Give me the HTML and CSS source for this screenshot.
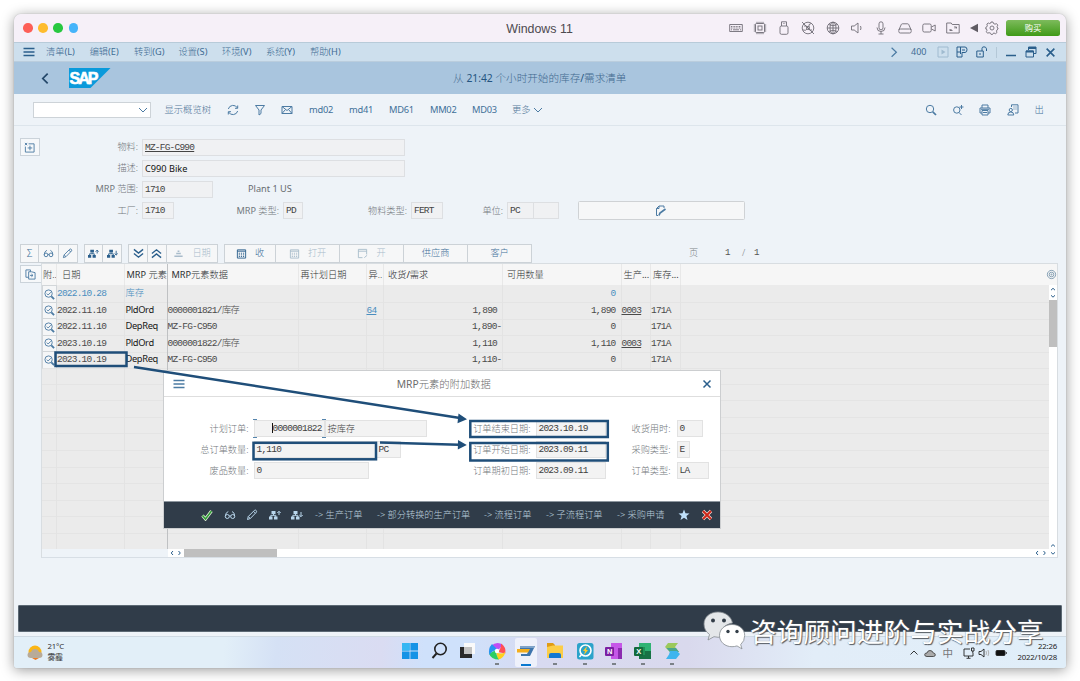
FILE: index.html
```html
<!DOCTYPE html>
<html lang="zh-CN">
<head>
<meta charset="utf-8">
<title>Windows 11</title>
<link rel="stylesheet" href="styles.css">
</head>
<body>
<svg class="defs" aria-hidden="true">
  <defs>
    <symbol id="pencil" viewBox="0 0 12 12"><path d="M1.500 10.500l.8-3L8.500 1.300q1-.6 1.700.2t.2 1.700L4.300 9.500zM7.500 2.300l2 2M2.300 7.500l2 2"/></symbol>
    <symbol id="glasses" viewBox="0 0 12 12"><circle cx="3.300" cy="7.500" r="2"/><circle cx="8.700" cy="7.500" r="2"/><path d="M1.300 7.300Q1.500 3.500 4.300 2.500M10.700 7.300Q10.800 3.500 8 2.500M5.300 7h1.400"/></symbol>
    <symbol id="tree-up" viewBox="0 0 12 12"><path class="solid" d="M2.500 2h4v3h-4zM0 7.500h3.500v3H0zM5 7.500h3.500v3H5z"/><path d="M4.500 5v1.500M1.800 8V6.300h5V8M10 6V2.500M8.300 4L10 2.300 11.700 4"/></symbol>
    <symbol id="tree-down" viewBox="0 0 12 12"><path class="solid" d="M2.500 2h4v3h-4zM0 7.500h3.500v3H0zM5 7.500h3.500v3H5z"/><path d="M4.500 5v1.500M1.800 8V6.300h5V8M10 3v4.500M8.300 6L10 7.700 11.700 6"/></symbol>
    <symbol id="calendar" viewBox="0 0 12 12"><path d="M1.500 2h9v9h-9zM1.500 3.500h9"/><path stroke-dasharray="1.300 1" d="M3 5.700h6.500M3 7.500h6.500M3 9.300h6.500"/></symbol>
    <symbol id="detail" viewBox="0 0 12 12"><circle cx="5" cy="5" r="4"/><path d="M3 5l1.500 1.500L7.500 3.500"/><path stroke-width="2" d="M8 8l3 3"/></symbol>
    <symbol id="chev" viewBox="0 0 10 10"><path d="M1 3l4 4 4-4"/></symbol>
    <symbol id="cross" viewBox="0 0 10 10"><path d="M1.500 1.500l7 7M8.500 1.500l-7 7"/></symbol>
    <symbol id="burger" viewBox="0 0 12 10"><path d="M.5 1.500h11M.5 5h11M.5 8.500h11"/></symbol>
  </defs>
</svg>
<div class="window">
  <header class="titlebar">
    <div class="lights"><i class="l-close"></i><i class="l-min"></i><i class="l-max"></i><i class="l-view"></i></div>
    <div class="wintitle">Windows 11</div>
    <div class="devices">
      <svg viewBox="0 0 14 14"><path d="M.7 3.500h12.600v7H.7z"/><path stroke-dasharray="1 .6" d="M2 5.500h10M2 7h10"/><path d="M2 8.800h1M4 8.800h6M11 8.800h1"/></svg>
      <svg viewBox="0 0 14 14"><rect x="2.500" y="2.500" width="9" height="9" rx="1"/><rect x="5" y="5" width="4" height="4"/><path d="M4 .8v1.700M6 .8v1.700M8 .8v1.700M10 .8v1.700M4 11.500v1.700M6 11.500v1.700M8 11.500v1.700M10 11.500v1.700M.8 4h1.700M.8 6h1.700M.8 8h1.700M.8 10h1.700M11.500 4h1.700M11.500 6h1.700M11.500 8h1.700M11.500 10h1.700"/></svg>
      <svg viewBox="0 0 14 14"><path d="M4.500 5V.8h5V5M6 2.500h.6M7.500 2.500h.6"/><rect x="3" y="5" width="8" height="8.300" rx="1.500"/></svg>
      <svg viewBox="0 0 14 14"><circle cx="7" cy="7" r="5.800"/><circle cx="7" cy="7" r="1.500"/><path d="M1 1l12 12M3 5q3-1 4 2t4 2M10 2.500Q7 3 8 6M2 9q3 1 4-1"/></svg>
      <svg viewBox="0 0 14 14"><circle cx="7" cy="7" r="5.800"/><path d="M7 1v12M1 7h12M2.500 3.500q4.500 2.500 9 0M2.500 10.500q4.500-2.500 9 0"/><ellipse cx="7" cy="7" rx="3" ry="5.800"/></svg>
      <svg viewBox="0 0 14 14"><path d="M1.500 5h2.700L8 2v10L4.200 9H1.500zM10.500 5q1 2 0 4"/></svg>
      <svg viewBox="0 0 14 14"><rect x="5" y=".8" width="4" height="8" rx="2"/><path d="M3 6.500q0 4 4 4t4-4M7 10.500V13M4.500 13h5"/></svg>
      <svg viewBox="0 0 14 14"><path d="M.8 9l2.500-5.500q.3-.7 1-.7h5.400q.7 0 1 .7L13.200 9"/><rect x=".8" y="8" width="12.400" height="4" rx="1.500"/></svg>
      <svg viewBox="0 0 14 14"><rect x=".8" y="3" width="8.400" height="8" rx="1.500"/><path d="M9.500 6l3.700-2v6l-3.700-2"/></svg>
      <svg viewBox="0 0 14 14"><path d="M.7 12V2h4.500l1 1.500h7V12zM4 9.500l1.500-1.500M4 9.500h2.500M4 9.500l0-1.500M10.500 6L9 7.500M10.500 6H8M10.500 6v1.500"/></svg>
      <svg class="narrow" viewBox="0 0 14 14"><path class="solid" d="M3 7l8-4.300v8.600z"/></svg>
      <svg class="gear" viewBox="0 0 14 14"><path d="M6 1h2l.5 1.500 1.500.7 1.500-.6 1.300 1.500-.7 1.400.4 1.500.5 0v1l-1 .8-.5 1.300.5 1.400-1.500 1.200-1.500-.7-1 .4-.5 1.100H6.200l-.7-1.400-1.500-.4-1.500.5-1.200-1.500.7-1.400-.6-1.500L.8 8V6.300L2 5.700l.3-1.500-.5-1.100L3.300 2l1.400.6L5.800 2z"/><circle cx="7" cy="7" r="2"/></svg>
    </div>
    <div class="buy">购买</div>
  </header>

  <nav class="menubar">
    <svg class="ic dark thick" viewBox="0 0 12 10"><use href="#burger"/></svg>
    <span>清单<b>(L)</b></span><span>编辑<b>(E)</b></span><span>转到<b>(G)</b></span><span>设置<b>(S)</b></span><span>环境<b>(V)</b></span><span>系统<b>(Y)</b></span><span>帮助<b>(H)</b></span>
    <svg class="ic" viewBox="0 0 10 10"><path d="M3 1.500L7 5.200 3 9"/></svg>
    <b class="client">400</b>
    <svg class="ic faint" viewBox="0 0 12 12"><path d="M1 1h10v10H1z"/><path class="solid" d="M4.500 3.500L8.500 6l-4 2.500z"/></svg>
    <svg class="ic dark" viewBox="0 0 12 12"><path d="M1 1h8q2 0 2 2.700T9 6.500H6V11H1zM1 6h3M4.500 1v7M6 4h3"/></svg>
    <svg class="ic dark" viewBox="0 0 12 12"><path d="M.8 5h6.500v6H.8zM6 5V2.500Q6 .8 8 .8t2.500 2V5M4 7v2"/></svg>
    <i class="vsep"></i>
    <svg class="ic dark thick" viewBox="0 0 12 12"><path d="M1 9.500h10"/></svg>
    <svg class="ic dark" viewBox="0 0 12 12"><path d="M1 5h7.500v6H1zM3.500 4V1H11v6.500H9"/><path class="solid" d="M1 4.500h7.500v2H1zM3.500 1H11v2H3.500z"/></svg>
    <svg class="ic dark thick x" viewBox="0 0 10 10"><use href="#cross"/></svg>
  </nav>

  <div class="apphead">
    <svg class="ic back" viewBox="0 0 10 12"><path d="M7 1.500L2.500 6 7 10.500"/></svg>
    <svg class="logo" viewBox="0 0 42 20"><path fill="#0a9adb" d="M0 0h41.500L21.500 20H0z"/><text x="0.500" y="15.500" textLength="29">SAP</text></svg>
    <div class="apptitle">从 <b>21:42</b> 个小时开始的库存<b>/</b>需求清单</div>
  </div>

  <div class="toolbar">
    <div class="combo"><svg class="ic" viewBox="0 0 10 10"><use href="#chev"/></svg></div>
    <span class="cjk">显示概览树</span>
    <svg class="ic" viewBox="0 0 12 12"><path d="M1.300 5A5 5 0 0 1 10.500 4M10.700 7A5 5 0 0 1 1.500 8M10.700 1.500V4.300H8M1.300 10.500V7.700H4"/></svg>
    <svg class="ic" viewBox="0 0 12 12"><path d="M1.500 1.500h9L7 6v3.500L5 11V6z"/></svg>
    <svg class="ic" viewBox="0 0 12 12"><path d="M1 2.500h10v7H1zM1 2.500l5 4 5-4M1 9.500l3.500-4M11 9.500l-3.500-4"/></svg>
    <b>md02</b><b>md41</b><b>MD61</b><b>MM02</b><b>MD03</b><span class="cjk more">更多</span>
    <svg class="ic small" viewBox="0 0 10 10"><use href="#chev"/></svg>
    <i></i>
    <svg class="ic" viewBox="0 0 12 12"><circle cx="5" cy="5" r="3.700"/><path class="w2" d="M7.800 7.800l3.200 3.200"/></svg>
    <svg class="ic" viewBox="0 0 12 12"><circle cx="4.800" cy="6" r="3.200"/><path d="M7 8.500l2.500 2.500M9.500 1v4M7.500 3h4"/></svg>
    <svg class="ic" viewBox="0 0 12 12"><path d="M3 4V1h6v3M3 9H1V4h10v5H9M3 6.500h6V11H3zM4 8.500h4M2 5.300h8"/></svg>
    <svg class="ic" viewBox="0 0 12 12"><path d="M4.500 3V.8H11V9H8M6.500 3h1M8.500 3h1M6.500 5h1M8.500 5h1"/><circle cx="3.800" cy="6" r="1.600"/><path d="M.8 11q0-3 3-3t3 3z"/></svg>
    <span class="out">出</span>
  </div>

  <main class="work">
    <section class="form">
      <div class="sq"><svg class="ic" viewBox="0 0 12 12"><path d="M5 2h6v9H1.500V5M6.500 4v5M4 6.500h5M1 1l2.500 2.500M3.500 1L1 3.500"/></svg></div>
      <div class="lines">
        <div class="line"><label>物料:</label><div class="fld wide mono"><u>MZ-FG-C990</u></div></div>
        <div class="line"><label>描述:</label><div class="fld wide strong">C990 Bike</div></div>
        <div class="line"><label><b>MRP</b> 范围:</label><div class="fld mono w71">1710</div><b class="plant">Plant 1 US</b></div>
        <div class="line"><label>工厂:</label><div class="fld mono w32">1710</div><label class="l2"><b>MRP</b> 类型:</label><div class="fld mono w20">PD</div><label class="l3">物料类型:</label><div class="fld mono w32">FERT</div><label class="l4">单位:</label><div class="fld mono w27">PC</div><div class="fld w26"></div>
          <div class="editbtn"><svg class="ic" viewBox="0 0 12 12"><path d="M3 10.500H1.500V3.500L4 1h5v2M1.500 3.500H4V1"/><path class="w2" d="M4 10.500l1-2.500 5.500-4"/></svg></div></div>
      </div>
    </section>

    <section class="actions">
      <div class="grp"><div class="b sigma">Σ</div><div class="b"><svg class="ic" viewBox="0 0 12 12"><use href="#glasses"/></svg></div><div class="b"><svg class="ic" viewBox="0 0 12 12"><use href="#pencil"/></svg></div></div>
      <div class="grp"><div class="b"><svg class="ic dark" viewBox="0 0 12 12"><use href="#tree-up"/></svg></div><div class="b"><svg class="ic dark" viewBox="0 0 12 12"><use href="#tree-down"/></svg></div></div>
      <div class="grp"><div class="b"><svg class="ic dark thick" viewBox="0 0 12 12"><path d="M1 1.500l5 4 5-4M1 6l5 4 5-4"/></svg></div><div class="b"><svg class="ic dark thick" viewBox="0 0 12 12"><path d="M1 6l5-4 5 4M1 10.500l5-4 5 4"/></svg></div><div class="b w51 off"><svg class="ic" viewBox="0 0 12 12"><path d="M5 3.500h2M3.500 6h5M1.500 9h9" class="w2"/></svg>日期</div></div>
      <div class="grp"><div class="b w52"><svg class="ic dark" viewBox="0 0 12 12"><use href="#calendar"/></svg>收</div><div class="b w64 off"><svg class="ic" viewBox="0 0 12 12"><use href="#calendar"/></svg>打开</div><div class="b w64 off"><svg class="ic" viewBox="0 0 12 12"><path d="M6 10.500H1.500v-9h9V7M1.500 3.500h9M8 10.500l3-2.500"/></svg>开</div><div class="b w64">供应商</div><div class="b w64">客户</div></div>
      <div class="pager"><span>页</span><b>1</b><span>/</span><b>1</b></div>
    </section>

    <section class="gridrow">
      <div class="sq"><svg class="ic" viewBox="0 0 12 12"><path d="M4 9H1V1h5v2M4 3h3l4 1v7H4zM5.500 7h3M7 5.500L8.700 7 7 8.500"/></svg></div>
      <div class="table">
        <div class="thead cols"><span>附..</span><span>日期</span><span><b>MRP</b> 元素</span><span><b>MRP</b>元素数据</span><span>再计划日期</span><span>异..</span><span>收货<b>/</b>需求</span><span>可用数量</span><span>生产<b>...</b></span><span>库存<b>...</b></span><span class="cfg"><svg class="ic" viewBox="0 0 12 12"><circle cx="6" cy="6" r="4.500"/><circle cx="6" cy="6" r="2.500"/><circle cx="6" cy="6" r=".6"/></svg></span></div>
        <div class="tbody">
          <div class="rows">
            <div class="tr cols stock"><span class="mag"><svg class="ic" viewBox="0 0 12 12"><use href="#detail"/></svg></span><span>2022.10.28</span><span class="el">库存</span><span></span><span></span><span></span><span></span><span class="num">0</span><span></span><span></span><span></span></div>
            <div class="tr cols"><span class="mag"><svg class="ic" viewBox="0 0 12 12"><use href="#detail"/></svg></span><span>2022.11.10</span><span class="el">PldOrd</span><span>0000001821/库存</span><span></span><span class="exc"><u>64</u></span><span class="num">1,890</span><span class="num">1,890</span><span><u>0003</u></span><span>171A</span><span></span></div>
            <div class="tr cols"><span class="mag"><svg class="ic" viewBox="0 0 12 12"><use href="#detail"/></svg></span><span>2022.11.10</span><span class="el">DepReq</span><span>MZ-FG-C950</span><span></span><span></span><span class="num neg">1,890-</span><span class="num">0</span><span></span><span>171A</span><span></span></div>
            <div class="tr cols"><span class="mag"><svg class="ic" viewBox="0 0 12 12"><use href="#detail"/></svg></span><span>2023.10.19</span><span class="el">PldOrd</span><span>0000001822/库存</span><span></span><span></span><span class="num">1,110</span><span class="num">1,110</span><span><u>0003</u></span><span>171A</span><span></span></div>
            <div class="tr cols"><span class="mag"><svg class="ic" viewBox="0 0 12 12"><use href="#detail"/></svg></span><span>2023.10.19</span><span class="el">DepReq</span><span>MZ-FG-C950</span><span></span><span></span><span class="num neg">1,110-</span><span class="num">0</span><span></span><span>171A</span><span></span></div>
            <div class="tr cols fill"><span></span><span></span><span></span><span></span><span></span><span></span><span></span><span></span><span></span><span></span><span></span></div>
          </div>
          <div class="vscroll">
            <svg class="ic dark" viewBox="0 0 8 15"><path d="M2 5.200L4 3.300 6 5.200M2 10.300L4 12.200l2-1.900"/></svg>
            <i class="thumb"></i><i class="track"></i>
            <svg class="ic dark" viewBox="0 0 8 7"><path d="M2 4.500L4 2.600l2 1.900"/></svg>
          </div>
        </div>
        <div class="hscroll">
          <svg class="ic dark" viewBox="0 0 16 8"><path d="M5 2L3.200 4 5 6M10.500 2l1.800 2-1.800 2"/></svg>
          <i class="hthumb"></i><i class="track"></i>
          <svg class="ic dark last" viewBox="0 0 24 8"><path d="M5 2L3.200 4 5 6M10.500 2l1.800 2-1.800 2M18 3.300l2 1.900 2-1.900"/></svg>
        </div>
      </div>
    </section>
    <div class="statusbar"></div>
  </main>

  <footer class="taskbar">
    <svg class="weather" viewBox="0 0 16 15"><circle cx="8" cy="7" r="6.500" fill="#fbb615"/><path fill="#ef7a22" d="M5 13h7l-3.500 2z"/><path fill="#b8ab99" d="M4 13q-3.500 0-3.500-3T4 7q1-3 4-3t4 3q3.500 0 3.500 3T12 13z"/></svg>
    <div class="temp">21°C<br>雾霾</div>
    <div class="apps">
      <svg viewBox="0 0 20 20"><path fill="#1593e6" d="M2 2h7.600v7.600H2zM10.400 2H18v7.600h-7.600zM2 10.400h7.600V18H2zM10.400 10.400H18V18h-7.600z"/><path fill="#35b7f3" d="M2 2h7.600v7.600H2z"/></svg>
      <svg viewBox="0 0 20 20"><circle cx="11.500" cy="8" r="5.700" fill="none" stroke="#222" stroke-width="1.600"/><path d="M7.500 12.500L3.500 17" stroke="#222" stroke-width="1.900"/></svg>
      <svg viewBox="0 0 20 20"><path fill="#2a2a2a" d="M2 6h12v11H2z"/><path fill="#fafafa" d="M6 2h11v11H6z"/><path fill="#c2c2c2" d="M6 6h8v7H6z"/></svg>
      <svg class="run" viewBox="0 0 20 20"><g transform="translate(10 10)"><path fill="#c04cf5" d="M-6-5Q0-10.500 6-6L1-1Q-2-4-6-5z"/><path fill="#ff4f55" d="M4-7.500Q9.500-4 8.300 2.500L1 1Q4.500-3 4-7.500z"/><path fill="#ffcf1e" d="M8.300 1Q7 7.500 1 8.500L-1 1Q4 4 8.300 1z"/><path fill="#2bce64" d="M2 8.500Q-6 8.500-8 2.500L-1-1Q-1 5 2 8.500z"/><path fill="#2793f2" d="M-7.500 4Q-9.500-2-5-7L1-1Q-5-1-7.500 4z"/><circle r="2.200" fill="#fff"/></g></svg>
      <svg class="active" viewBox="0 0 20 20"><path fill="#3e75ad" d="M4 5h15l-5 10H5v-2h6l1-2H4z"/><path fill="#7fa3c8" d="M4 5h15l-1 2H4z"/><path fill="#f4ae1b" d="M1 8h13l-2 3.500H1z"/></svg>
      <svg class="run" viewBox="0 0 20 20"><path fill="#e09b14" d="M2 2h6l2 2v4H2z"/><path fill="#fccd47" d="M2 6l6-1.500h10V17H2z"/><path fill="#1377d2" d="M4 17v-3q0-2 2-2h8q2 0 2 2v3z"/></svg>
      <svg class="run" viewBox="0 0 20 20"><rect x="2" y="2" width="16.500" height="16.500" rx="2.500" fill="#2ba3ca"/><circle cx="10.500" cy="9.500" r="5.500" fill="none" stroke="#fff" stroke-width="1.600"/><path fill="#ffc928" d="M12 5l-4 5h2l-1 4 4-5h-2z"/><path stroke="#fff" stroke-width="1.500" d="M6.500 13.500l-2 2.500"/></svg>
      <svg class="run" viewBox="0 0 20 20"><path fill="#c657e8" d="M7 2h11v16H7z"/><path fill="#8c2bb0" d="M14 7h4v11h-4z"/><rect x="1" y="6" width="9" height="9" rx="1" fill="#7b1fa2"/><text x="3" y="13" class="glyph">N</text></svg>
      <svg class="run" viewBox="0 0 20 20"><path fill="#2fb373" d="M6 2h12v8H6z"/><path fill="#177245" d="M6 10h12v8H6z"/><path fill="#1e9156" d="M6 6h6v8H6z"/><rect x="1" y="6" width="9" height="9" rx="1" fill="#136a3c"/><text x="3.200" y="13" class="glyph">X</text></svg>
      <svg class="run" viewBox="0 0 20 20"><path fill="#9bc95c" d="M3 6l3-4h10l-3 4 4 5H8z"/><path fill="#49a58c" d="M4.500 7L8 11h9l-3-4z"/><path fill="#3fb5ee" d="M8 10h7l3 3-4 5H4l3-4.500z"/></svg>
    </div>
    <div class="tray">
      <svg viewBox="0 0 12 12"><path d="M2.500 7.500L6 4l3.500 3.500"/></svg>
      <svg viewBox="0 0 12 12"><path fill="#aaa" stroke="#444" d="M3 9.500q-2.300 0-2.300-1.800T3 6q.5-2.500 3-2.500T9.300 6q2 .2 2 1.800T9.500 9.500z"/></svg>
      <span>中</span>
      <svg viewBox="0 0 12 12"><path d="M7 2H1v7h9V6M3.500 11.300h4M5.500 9v2M8.500 1h2.500v3H8.500zM9.800 4v2"/></svg>
      <svg viewBox="0 0 12 12"><path d="M1 4.500h2L6 2v8L3 7.500H1z"/><path stroke="#aaa" d="M8 4q1 2 0 4M10 3q1.500 3 0 6"/></svg>
      <svg viewBox="0 0 12 12"><rect x="1" y="3.500" width="9" height="5" rx="1" fill="#111"/><path d="M11.300 5v2"/></svg>
    </div>
    <div class="clock">22:26<br>2022/10/28</div>
  </footer>
</div>

<div class="dialog">
  <div class="dhead"><svg class="ic thick" viewBox="0 0 12 10"><use href="#burger"/></svg><div><b>MRP</b>元素的附加数据</div><svg class="ic dark thick" viewBox="0 0 10 10"><use href="#cross"/></svg></div>
  <div class="dbody">
    <label>计划订单:</label><div class="cell"><div class="fld mono focus"><span class="caret"></span>0000001822</div><div class="fld desc">按库存</div></div><label>订单结束日期:</label><div class="fld mono w70">2023.10.19</div><label>收货用时:</label><div class="fld mono w25">0</div>
    <label>总订单数量:</label><div class="cell"><div class="fld mono qty">1,110</div><div class="fld mono unit">PC</div></div><label>订单开始日期:</label><div class="fld mono w70">2023.09.11</div><label>采购类型:</label><div class="fld mono w13">E</div>
    <label>废品数量:</label><div class="cell"><div class="fld mono scrap">0</div></div><label>订单期初日期:</label><div class="fld mono w70">2023.09.11</div><label>订单类型:</label><div class="fld mono w32">LA</div>
  </div>
  <div class="dfoot">
    <svg class="ic" viewBox="0 0 12 12"><path class="halo" d="M1.500 6.500L4.500 10 10.500 2"/><path class="tick" d="M1.500 6.500L4.500 10 10.500 2"/></svg>
    <svg class="ic" viewBox="0 0 12 12"><use href="#glasses"/></svg>
    <svg class="ic" viewBox="0 0 12 12"><use href="#pencil"/></svg>
    <svg class="ic" viewBox="0 0 12 12"><use href="#tree-up"/></svg>
    <svg class="ic" viewBox="0 0 12 12"><use href="#tree-down"/></svg>
    <span>-&gt; 生产订单</span><span>-&gt; 部分转换的生产订单</span><span>-&gt; 流程订单</span><span>-&gt; 子流程订单</span><span>-&gt; 采购申请</span>
    <svg class="ic star" viewBox="0 0 12 12"><path class="solid" d="M6 .5l1.500 3.800 4 .2-3.100 2.500 1.100 4L6 8.800 2.500 11l1.100-4L.5 4.500l4-.2z"/></svg>
    <svg class="ic" viewBox="0 0 12 12"><path class="halo h2" d="M2 2l8 8M10 2l-8 8"/><path class="redx" d="M2 2l8 8M10 2l-8 8"/></svg>
  </div>
</div>

<svg class="notes" viewBox="0 0 1080 681">
  <g fill="none" stroke="#1f4e79" stroke-width="2.500">
    <rect x="55.500" y="352.500" width="71" height="13.500"/>
    <rect x="253.500" y="442.800" width="122.500" height="16.500"/>
    <rect x="470.300" y="421" width="137.500" height="16"/>
    <rect x="470.300" y="443" width="137.500" height="17.500"/>
    <path d="M134 367l326 51M380 442.500l79 2.300"/>
  </g>
  <path fill="#1f4e79" d="M458.500 413.500l8.500 5.800-9.500 4zM458 440l8.800 5-9 4.500z"/>
</svg>

<div class="watermark">
  <svg viewBox="0 0 44 40"><path fill="#e4e7e9" stroke="#858b91" stroke-width=".8" d="M15 1C6.500 1 1 6.500 1 13q0 6.500 5.500 10.500L5 29l6-3.300q4 1 8 .3Q16 16 27 12.500L29.500 12C28 5 22 1 15 1z"/><path fill="#fff" stroke="#858b91" stroke-width=".8" d="M29 13.500c-7 0-12.500 4.500-12.500 11s5.500 11.200 12.500 11.200q2.500 0 5-.8l5 3-1.300-4.300q4-3.500 4-9.100c0-6.500-5.700-11-12.700-11z"/><g fill="#333e48"><circle cx="10" cy="9.500" r="2"/><circle cx="21" cy="9.500" r="2"/><circle cx="25" cy="20.500" r="1.700"/><circle cx="34" cy="20.500" r="1.700"/></g></svg>
  <span>咨询顾问进阶与实战分享</span>
</div>
</body>
</html>
```
FILE: styles.css
```css
* { box-sizing: border-box; }
body {
  margin: 0; padding: 14px; width: 1080px; height: 681px; overflow: hidden;
  background: #fff; color: #3f7099; position: relative;
  font: 300 9.2px/12px "Noto Sans", "Noto Sans CJK SC", sans-serif;
  white-space: nowrap;
}
i { font-style: normal; }
b { font-weight: 400; }
.defs { display: none; }
.ic { width: 12px; height: 12px; fill: none; stroke: currentColor; color: #4c7ba3; stroke-width: 1; display: block; }
.solid { fill: currentColor; stroke: none; }
.dark { color: #2b5f8c; }
.thick { stroke-width: 1.500; }
.w2 { stroke-width: 1.700; }
.mono { font-family: "Liberation Mono", "Noto Sans CJK SC", monospace; font-size: 9.500px; letter-spacing: -.78px; }

.window {
  width: 1052px; height: 654px; display: flex; flex-direction: column;
  border-radius: 7px 7px 3px 3px; overflow: clip; background: #eef3f8;
  box-shadow: 0 2px 13px rgba(0,0,0,.4), 0 0 1px rgba(0,0,0,.35);
}

.titlebar { height: 28px; background: #f6f0f8; display: grid; grid-template-columns: 462px 126px 122px 282px 54px; align-items: center; }
.lights { display: flex; gap: 5.500px; padding-left: 9px; }
.lights i { width: 9.700px; height: 9.700px; border-radius: 50%; }
.l-close { background: #fd5f57; } .l-min { background: #febc2e; } .l-max { background: #28c840; } .l-view { background: #45b4fa; }
.wintitle { font: 12.400px/16px "Liberation Sans", sans-serif; color: #4d4a50; text-align: center; padding: 2px 0 0 1px; }
.devices { grid-column: 4; display: flex; align-items: center; margin-left: 5px; }
.devices svg { width: 14px; height: 14px; margin-right: 10.150px; fill: none; stroke: #716d76; stroke-width: .9; }
.devices .solid { fill: #605c64; stroke: none; }
.devices .narrow { margin-left: -3px; margin-right: 4px; flex: none; }
.devices .gear { margin-right: 0; }
.buy { background: linear-gradient(#7dbb5c, #3f9a17); color: #fff; border-radius: 2.500px; height: 15.500px; line-height: 15px; text-align: center; font-size: 8.300px; font-weight: 400; }

.menubar {
  height: 20px; background: #cddfed; border-top: 1px solid #b8cbd9; border-bottom: 1px solid #bacddd;
  display: grid; align-items: center; padding-left: 9px; color: #3f6c94;
  grid-template-columns: 23px 43.700px 44.300px 44.500px 43.500px 44px 44px 578px 23px 26px 19.500px 20px 20px 9px 19.500px 20.500px 16px;
}
.menubar .x { width: 11px; height: 11px; }
.client { font-size: 9px; }
.faint { color: #a0bbd0; }
.vsep { width: 1px; height: 11px; background: #b4c8d7; }

.apphead { height: 32px; background: #a9c5de; display: grid; grid-template-columns: 55.500px 42px 1fr; align-items: center; }
.back { margin-left: 26px; color: #24486a; stroke-width: 1.600; height: 13px; width: 11px; }
.logo { width: 42px; height: 20px; margin-left: -.5px; margin-top: -1px; }
.logo text { font: 700 16px "Liberation Sans", sans-serif; fill: #fff; stroke: #fff; stroke-width: .6; }
.apptitle { font-size: 10.600px; color: #41698f; text-align: center; padding-right: 98px; }
.apptitle b { color: #24547f; font-size: 10.300px; }

.toolbar {
  height: 32px; border-bottom: 1px solid #dde5ec; display: grid; align-items: center; padding-left: 19px;
  grid-template-columns: 131.500px 62px 27.500px 27px 28px 40px 40px 41px 42px 40px 21px 12px 379.500px 27.500px 27px 27.500px 27px 20px;
  font-size: 9.300px;
}
.toolbar b { letter-spacing: -.25px; }
.combo { width: 118px; height: 16px; background: #fff; border: 1px solid #cdd3d8; display: flex; align-items: center; justify-content: flex-end; padding-right: 2px; }
.combo .ic, .small { width: 10px; height: 10px; }
.cjk { color: #55799a; }
.out { padding-left: 1px; }

.work { height: 510px; display: flex; flex-direction: column; }
.form { display: flex; padding: 12px 0 0 6px; height: 118px; }
.sq { width: 19.500px; height: 18px; border: 1px solid #cbd3da; background: #f6f8fa; display: flex; align-items: center; justify-content: center; flex: none; }
.sq .ic { width: 11px; height: 11px; }
.lines { display: grid; grid-auto-rows: 21.200px; align-content: start; }
.line { display: flex; align-items: center; height: 18px; }
label { color: #73787d; text-align: right; }
.line > label:first-child { width: 98.500px; margin-right: 4px; }
.fld { height: 17px; border: 1px solid #dddfe2; background: #f0f1f3; color: #444; line-height: 15.500px; padding-left: 2px; flex: none; }
.fld u { text-underline-offset: 1px; }
.wide { width: 263px; }
.strong { color: #111; font-weight: 400; }
.w71 { width: 71px; } .w32 { width: 32px; } .w20 { width: 20px; } .w27 { width: 26.500px; } .w26 { width: 25.500px; border-left: 0; }
.w70 { width: 70px; } .w25 { width: 26px; } .w13 { width: 13px; }
.plant { color: #686c70; margin-left: 35px; }
.l2 { width: 105px; margin-right: 4px; }
.l3 { width: 104px; margin-right: 4px; }
.l4 { width: 60px; margin-right: 4px; }
.editbtn { width: 167px; height: 18.500px; margin-left: 18.500px; border: 1px solid #cfd2d5; border-radius: 1.500px; background: #f6f7f8; display: flex; align-items: center; justify-content: center; flex: none; }

.actions { display: flex; gap: 6px; padding-left: 6px; height: 18.500px; }
.grp { display: flex; }
.grp .b:first-child { border-left: 1px solid #ccd2d7; }
.b { width: 19.300px; border: 1px solid #ccd2d7; border-left: 0; background: #f6f7f8; display: flex; align-items: center; justify-content: center; gap: 8px; }
.b .ic { width: 11px; height: 11px; }
.sigma { font-size: 10px; color: #3f7099; }
.w51.b { width: 51px; } .w52.b { width: 52px; } .w64.b { width: 64px; }
.off, .off .ic { color: #a9bccb; }
.pager { display: grid; grid-template-columns: 36px 17px 12px 10px; align-items: center; padding-left: 151px; color: #7d8387; }
.pager b { color: #555; font-family: "Liberation Mono", monospace; }

.gridrow { display: flex; height: 295px; margin-top: .500px; }
.gridrow .sq { margin: 2px 0 0 6px; width: 20.500px; border-right: 0; }
.table { width: 1017px; height: 295px; border: 1px solid #d8dde1; border-bottom-color: #d7dee5; display: flex; flex-direction: column; }
.cols { display: grid; grid-template-columns: 15.500px 67.500px 43px 131px 68px 17.500px 119px 118.500px 29.500px 30px 1fr; }
.cols span { border-right: 1px solid #e3e3e3; }
.cols span:nth-child(3) { border-right-color: #bfc1c3; }
.cols span:last-child { border-right: 0; }
.thead { height: 21px; background: #f6f6f6; color: #2e3132; line-height: 21px; flex: none; }
.thead span { padding-left: 4px; border-right-color: #e8e8e8; overflow: hidden; }
.thead span:nth-child(1) { padding-left: 1.500px; } .thead span:nth-child(2) { padding-left: 5px; }
.thead span:nth-child(3), .thead span:nth-child(5), .thead span:nth-child(9), .thead span:nth-child(10), .thead span:nth-child(6) { padding-left: 2px; }
.thead .cfg { display: flex; justify-content: flex-end; align-items: center; }
.cfg .ic { width: 11px; height: 11px; color: #7c98ae; }
.tbody { display: flex; height: 264px; }
.rows { flex: 1; background: #ebebeb; display: flex; flex-direction: column; }
.tr { height: 16.600px; line-height: 17px; color: #4a4a4a; font-family: "Liberation Mono", "Noto Sans CJK SC", monospace; font-size: 9.500px; letter-spacing: -.78px; }
.tr:not(.fill) span { border-bottom: 1px solid #e4e4e4; }
.tr .mag { background: #f5f6f7; border: 1px solid #d2d6d9; display: flex; align-items: center; justify-content: center; }
.mag .ic { width: 11px; height: 11px; }
.tr .el { font: 400 9.300px/16.500px "Noto Sans", "Noto Sans CJK SC", sans-serif; letter-spacing: -.35px; color: #161616; padding-left: 1px; }
.tr.stock, .tr.stock .el { color: #4a8ebf; }
.stock .el { font-weight: 300; letter-spacing: 0; }
.tr .exc { color: #4a8ebf; }
.num { text-align: right; padding-right: 5px; }
.neg { padding-right: .5px; }
.fill { flex: 1; background: repeating-linear-gradient(transparent 0 15.600px, #e4e4e4 15.600px 16.600px); }
.vscroll { width: 8px; background: #fff; display: flex; flex-direction: column; }
.vscroll svg { width: 8px; height: auto; }
.thumb { height: 47px; background: #bfbfbf; }
.track { flex: 1; }
.hscroll { height: 8px; flex: none; margin-left: 126px; background: #fff; display: flex; }
.hscroll svg { width: 16px; height: 8px; }
.hthumb { width: 93px; background: #bfbfbf; }
.hscroll .last { width: 24px; }
.statusbar { margin: 47px 4px 0 3.500px; height: 27px; background: #303c49; border: 1px solid #5c6974; border-radius: 1px; flex: none; }

.taskbar {
  height: 32px; border-top: 1px solid #cfdae3; display: grid; align-items: center; padding-left: 12.500px;
  grid-template-columns: 21px 351.500px 505px 102px 51px;
  background: linear-gradient(95deg, #e2eff8 0 20%, #d5e1f5 25%, #dadcf2 35%, #cfe1fb 39%, #cfe1fb 43%, #d8daf1 50%, #d9d9ed 64%, #e2edf8 76%, #e0eef9);
  font-weight: 400; color: #333;
}
.weather { width: 16px; height: 15px; }
.temp, .clock { font-size: 7.800px; line-height: 11px; letter-spacing: -.2px; margin-top: -2px; }
.apps { display: flex; gap: 7.100px; }
.apps svg { width: 22px; height: 29px; padding: 3px 1px 6px; }
.apps .run { background: linear-gradient(#7b8188, #7b8188) 50% 94%/4px 2px no-repeat; }
.apps .active { background: linear-gradient(#0b79d0, #0b79d0) 50% 97%/10px 2px no-repeat, #eef1fb; border-radius: 2px; }
.glyph { font: 700 7.500px "Liberation Sans", sans-serif; fill: #fff; }
.tray { display: grid; grid-template-columns: 16px 18.500px 20.500px 15px 17px 12px; align-items: center; padding-left: 4px; }
.tray svg { width: 12px; height: 12px; fill: none; stroke: #222; stroke-width: .9; }
.tray span { font-size: 10.500px; color: #777; }
.clock { text-align: right; direction: ltr; justify-self: end; color: #222; }

.dialog { position: absolute; left: 163px; top: 370px; width: 557.500px; height: 159px; background: #fff; border: 1px solid #ccced0; display: flex; flex-direction: column; }
.dhead { height: 26px; border-bottom: 1px solid #dedede; display: grid; grid-template-columns: 30px 1fr 26px; align-items: center; color: #6c6c6c; text-align: center; font-size: 10.300px; flex: none; }
.dhead svg { justify-self: center; }
.dhead svg:last-child { width: 10px; height: 10px; }
.dbody { flex: 1; padding-top: 23px; display: grid; grid-template-columns: 86px 189px 93px 70px 70px 40px; grid-auto-rows: 21.200px; align-content: start; align-items: start; }
.dbody label { line-height: 17px; padding-right: 1.500px; }
.dbody label:nth-child(4n+3) { padding-right: 1.500px; }
.dbody > .fld, .cell { margin-left: 3.500px; }
.dbody > .w25, .dbody > .w13, .dbody > .w32 { margin-left: 4.500px; }
.dbody .fld { background: #f3f3f3; border-color: #e2e2e2; color: #3f3f3f; }
.cell { display: flex; }
.cell .focus { width: 71px; padding-left: 17px; position: relative; }
.focus::before, .focus::after { content: ""; position: absolute; top: -2px; bottom: -2px; width: 4px; border: solid #5585ad; border-width: 1px 0; }
.focus::before { left: -2px; } .focus::after { right: -2px; }
.caret { display: inline-block; width: 1px; height: 10px; background: #111; vertical-align: -2px; }
.desc { width: 102px; } .qty { width: 122px; } .unit { width: 25px; } .scrap { width: 115px; }
.dfoot { height: 27px; background: #303c49; border-top: 1px solid #8e979f; color: #b9cddd; display: grid; align-items: center; padding-left: 37px; grid-template-columns: 22.500px 22.500px 22.500px 22.500px 24px 62px 107px 62px 71px 60.500px 23px 14px; flex: none; }
.dfoot .ic { color: #b9d6ec; }
.dfoot .halo { stroke: #e3efd9; stroke-width: 3; }
.dfoot .tick { stroke: #2f9b35; stroke-width: 1.500; }
.dfoot .h2 { stroke: #f5dcd7; stroke-width: 3.300; }
.dfoot .redx { stroke: #ce2618; stroke-width: 2; }
.dfoot .star { color: #bfe0fa; }

.notes { position: absolute; left: 0; top: 0; width: 1080px; height: 681px; }
.watermark { position: absolute; left: 703px; top: 611px; display: flex; align-items: center; gap: 3px; color: #fff; font: 400 26.700px/40px "Noto Sans CJK SC", sans-serif; text-shadow: 1px 1px 1px #555b62, 0 0 1px #777; }
.watermark svg { width: 44px; height: 40px; }
```
